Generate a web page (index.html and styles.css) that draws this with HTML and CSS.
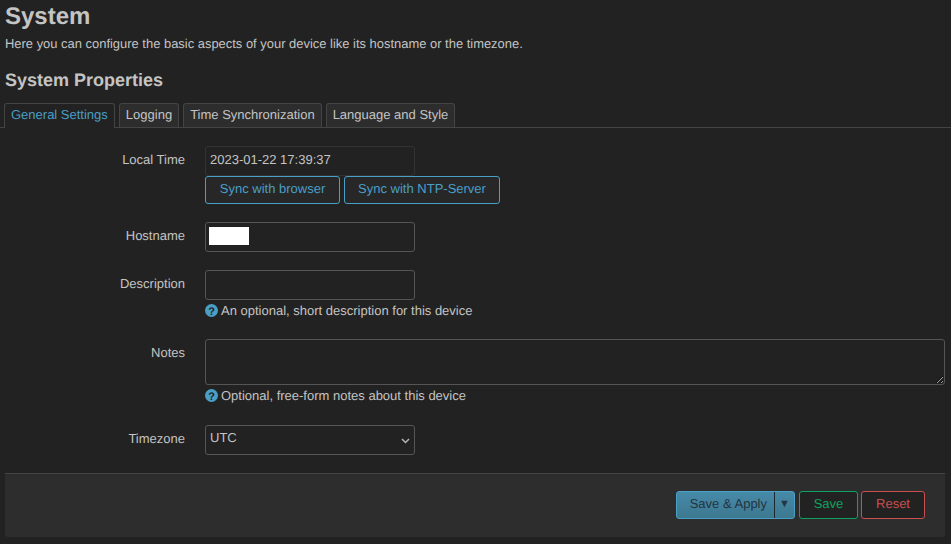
FILE: index.html
```html
<!DOCTYPE html>
<html lang="en">
<head>
    <meta charset="utf-8" />
    <title>System</title>
    <link rel="stylesheet" href="styles.css">
</head>
<body>
<main class="content">
    <h2 class="page-title">System</h2>
    <p class="page-desc">Here you can configure the basic aspects of your device like its hostname or the timezone.</p>
    <h3 class="section-title">System Properties</h3>

    <ul class="tabs">
        <li class="tab active">General Settings</li>
        <li class="tab">Logging</li>
        <li class="tab">Time Synchronization</li>
        <li class="tab">Language and Style</li>
    </ul>

    <form class="settings">
        <div class="row">
            <label class="row-label">Local Time</label>
            <div class="row-field">
                <div class="readonly-box">2023-01-22 17:39:37</div>
                <div class="sync-buttons">
                    <button type="button" class="btn btn-blue sync-browser">Sync with browser</button>
                    <button type="button" class="btn btn-blue sync-ntp">Sync with NTP-Server</button>
                </div>
            </div>
        </div>

        <div class="row">
            <label class="row-label" for="hostname">Hostname</label>
            <div class="row-field">
                <div class="text-box" id="hostname"><span class="redacted"></span></div>
            </div>
        </div>

        <div class="row">
            <label class="row-label" for="description">Description</label>
            <div class="row-field">
                <input class="text-box" type="text" id="description">
                <div class="hint">
                    <svg class="hint-icon" viewBox="0 0 13 13"><circle cx="6.5" cy="6.5" r="6.5" fill="#4a9fc7"/><text x="6.5" y="10.6" text-anchor="middle" class="hint-mark">?</text></svg>
                    An optional, short description for this device
                </div>
            </div>
        </div>

        <div class="row row-notes">
            <label class="row-label" for="notes">Notes</label>
            <div class="row-field wide">
                <textarea class="notes-box" id="notes"></textarea>
                <div class="hint">
                    <svg class="hint-icon" viewBox="0 0 13 13"><circle cx="6.5" cy="6.5" r="6.5" fill="#4a9fc7"/><text x="6.5" y="10.6" text-anchor="middle" class="hint-mark">?</text></svg>
                    Optional, free-form notes about this device
                </div>
            </div>
        </div>

        <div class="row">
            <label class="row-label" for="timezone">Timezone</label>
            <div class="row-field select-wrap">
                <select class="select-box" id="timezone">
                    <option>UTC</option>
                </select>
                <svg class="select-chevron" viewBox="0 0 9 6"><path d="M1 1l3.5 3.5L8 1" fill="none" stroke="#b4b4b4" stroke-width="1.5"/></svg>
            </div>
        </div>
    </form>

    <div class="actions">
        <div class="apply-group">
            <button type="button" class="apply-main">Save &amp; Apply</button>
            <button type="button" class="apply-arrow">▼</button>
        </div>
        <button type="button" class="btn btn-green">Save</button>
        <button type="button" class="btn btn-red">Reset</button>
    </div>
</main>
</body>
</html>
```

FILE: styles.css
```css
html, body {
    margin: 0;
    padding: 0;
    height: 544px;
    overflow: hidden;
}

body {
    background-color: #222;
    color: #c4c4c4;
    font-family: "Liberation Sans", Arial, sans-serif;
    font-size: 13px;
    line-height: 18px;
    text-rendering: geometricPrecision;
}

.content {
    padding: 0 6px 0 5px;
}

.page-title {
    margin: 0;
    padding-top: 2px;
    height: 30px;
    font-size: 24px;
    line-height: 30px;
    font-weight: bold;
}

.page-desc {
    margin: 3px 0 0;
    line-height: 18px;
    font-size: 12.95px;
}

.section-title {
    margin: 16px 0 0;
    font-size: 18px;
    line-height: 22px;
    font-weight: bold;
}

/* tabs */
.tabs {
    display: flex;
    gap: 4px;
    list-style: none;
    margin: 12px -6px 0 -5px;
    padding: 0 0 0 4px;
    height: 24px;
    border-bottom: 1px solid #444;
}

.tab {
    height: 24px;
    box-sizing: border-box;
    padding: 2px 6px 0;
    line-height: 18px;
    background-color: #2d2d2d;
    border: 1px solid #444;
    border-bottom: none;
    border-radius: 3px 3px 0 0;
}

.tab.active {
    height: 25px;
    color: #4a9fc7;
    background-color: #222;
}

/* form rows */
.settings {
    display: flex;
    flex-direction: column;
    gap: 18px;
    margin-top: 18px;
}

.row {
    display: flex;
    gap: 20px;
}

.row-notes {
    margin-top: 1px;
    margin-bottom: 2px;
}

.row-label {
    flex: none;
    width: 180px;
    padding-top: 5px;
    text-align: right;
    line-height: 18px;
}

.row-field {
    width: 210px;
}

.row-field.wide {
    flex: 1;
    width: auto;
}

.select-wrap {
    position: relative;
}

.readonly-box, .text-box, .select-box, .notes-box {
    display: block;
    box-sizing: border-box;
    width: 210px;
    height: 30px;
    margin: 0;
    background-color: #222;
    color: #c4c4c4;
    border: 1px solid #555;
    border-radius: 3px;
    font: 13px/18px "Liberation Sans", Arial, sans-serif;
    text-rendering: geometricPrecision;
}

.readonly-box {
    padding: 4px 4px 6px;
    border-color: #333;
}

.text-box {
    padding: 4px;
    outline: none;
}

.redacted {
    display: block;
    width: 40px;
    height: 18px;
    margin-left: -1px;
    background-color: #fff;
}

.notes-box {
    width: 100%;
    height: 46px;
    padding: 4px;
}

.select-box {
    appearance: none;
    padding: 0 0 4px 4px;
}

.select-chevron {
    position: absolute;
    right: 5px;
    top: 13px;
    width: 9px;
    height: 6px;
    pointer-events: none;
}

.sync-buttons {
    display: flex;
    gap: 4px;
}

.btn {
    box-sizing: border-box;
    height: 28px;
    padding: 0 0 2px;
    background-color: #222;
    border: 1px solid;
    border-radius: 3px;
    font: 13px/18px "Liberation Sans", Arial, sans-serif;
    text-rendering: geometricPrecision;
    white-space: nowrap;
    flex: none;
}

.btn-blue {
    color: #4a9fc7;
    border-color: #4a9fc7;
    background-color: #272727;
}

.sync-browser {
    width: 135px;
}

.sync-ntp {
    width: 156px;
}

.hint {
    display: flex;
    align-items: center;
    gap: 3px;
    margin-top: 2px;
    height: 18px;
    white-space: nowrap;
}

.hint-icon {
    width: 13px;
    height: 13px;
    margin-top: -2px;
    flex: none;
}

.hint-mark {
    font: bold 11px "Liberation Sans", Arial, sans-serif;
    fill: #222;
}

/* bottom action bar */
.actions {
    display: flex;
    justify-content: flex-end;
    align-items: center;
    gap: 4px;
    box-sizing: border-box;
    height: 64px;
    margin-top: 18px;
    padding: 0 20px 1px 0;
    background-color: #2d2d2d;
    border-top: 1px solid #444;
    border-radius: 0 0 3px 3px;
}

.apply-group {
    display: flex;
    height: 28px;
    background: linear-gradient(#468aa8, #3d7890);
    border: 1px solid #4a9fc7;
    border-radius: 3px;
    box-sizing: border-box;
}

.apply-main, .apply-arrow {
    background: none;
    border: none;
    color: #243440;
    font: 13px/18px "Liberation Sans", Arial, sans-serif;
    text-rendering: geometricPrecision;
}

.apply-main {
    width: 98px;
    padding: 0 7px 2px 0;
    text-align: right;
    border-right: 1px solid #1c2a30;
}

.apply-arrow {
    width: 19px;
    padding: 0 0 2px;
    font-size: 11px;
}

.btn-green {
    width: 59px;
    margin-right: -1px;
    color: #10a060;
    border-color: #10a060;
}

.btn-red {
    width: 64px;
    color: #c94f4f;
    border-color: #c94f4f;
}
```
